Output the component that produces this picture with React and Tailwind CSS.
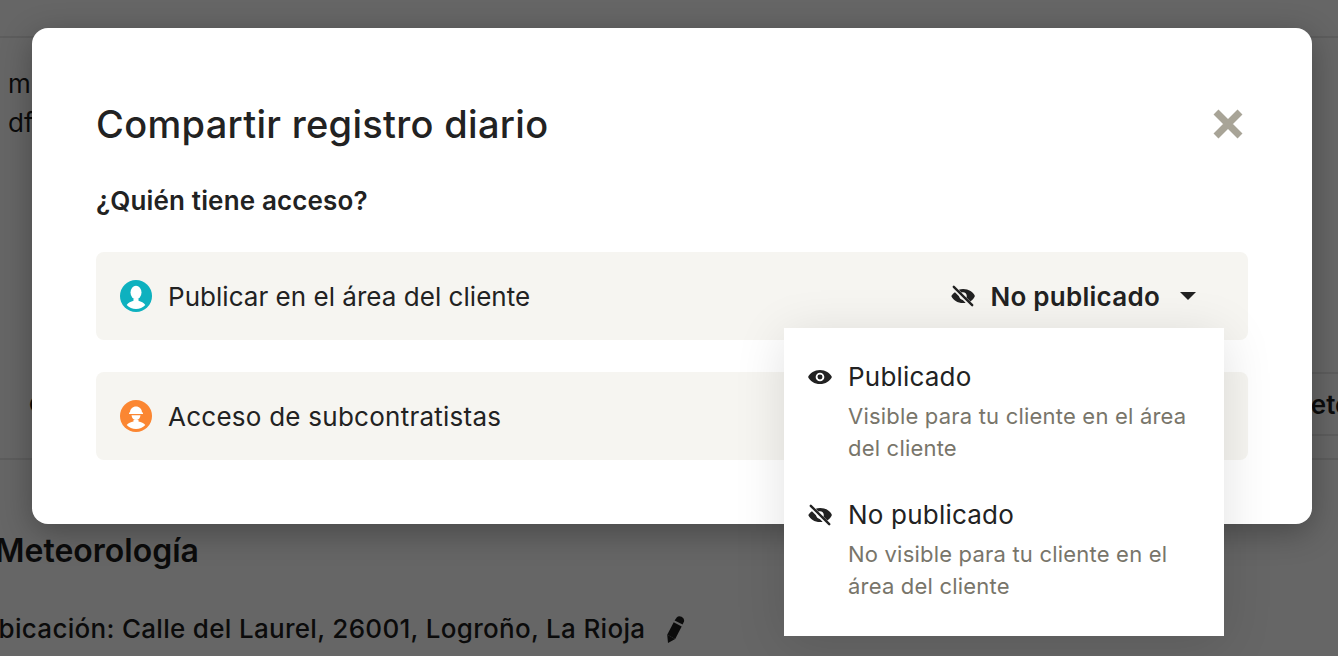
const font = { fontFamily: '"Inter", "Noto Sans", sans-serif' };

function EyeOff({ className, gap = "#ffffff" }) {
  return (
    <svg viewBox="0 0 24 24" className={className} fill="currentColor">
      <path d="M12 5.500c-1.400 0-2.700.3-3.900.8L10.600 8.800c.4-.2.9-.3 1.400-.3 1.900 0 3.500 1.600 3.500 3.500 0 .5-.1 1-.3 1.400l3.600 3.600c2-1.200 3.500-3 4.200-5-1.500-3.800-5.800-6.500-10.800-6.500z" />
      <path d="M5.200 8c-1.800 1.100-3.200 2.600-4 4 1.500 3.800 5.800 6.500 10.800 6.500 1 0 2-.1 2.900-.3l-2.500-2.700c-.1 0-.3 0-.4 0-1.900 0-3.500-1.600-3.500-3.500v-.4L5.200 8z" />
      <path d="M2.500 5.500L18.500 21.500" stroke={gap} strokeWidth="1.200" />
      <path d="M3.500 3.500L20.500 20.500" stroke="currentColor" strokeWidth="2.200" strokeLinecap="round" />
    </svg>
  );
}

function Eye({ className }) {
  return (
    <svg viewBox="0 0 24 24" className={className} fill="currentColor">
      <path d="M12 5.500c-5 0-9.300 2.700-11 6.500 1.700 3.800 6 6.500 11 6.500s9.300-2.700 11-6.500c-1.700-3.800-6-6.500-11-6.500zm0 10.500a4 4 0 1 1 0-8 4 4 0 0 1 0 8zm0-6.300a2.300 2.300 0 1 0 0 4.600 2.300 2.300 0 0 0 0-4.600z" />
    </svg>
  );
}

function ClientIcon() {
  return (
    <svg viewBox="0 0 32 32" className="w-8 h-8 shrink-0">
      <circle cx="16" cy="16" r="16" fill="#0eb1bf" />
      <ellipse cx="16" cy="12.500" rx="5.500" ry="6.800" fill="#ffffff" />
      <path d="M13.500 18.500v2.200c-2.500 1-5.500 1.800-6.800 4.300A14 14 0 0 0 16 29a14 14 0 0 0 9.300-4c-1.300-2.500-4.300-3.300-6.800-4.300v-2.200z" fill="#ffffff" />
    </svg>
  );
}

function SubcontractorIcon() {
  return (
    <svg viewBox="0 0 32 32" className="w-8 h-8 shrink-0">
      <circle cx="16" cy="16" r="16" fill="#fb8632" />
      <path d="M10 12.500c0-3.500 2.700-6 6-6s6 2.500 6 6h1v1.500H9v-1.500z" fill="#ffffff" />
      <path d="M11.500 15.200h9c-.3 2.800-2 4.800-4.500 4.800s-4.200-2-4.500-4.800z" fill="#ffffff" />
      <path d="M13.500 20v1.500c-2.500.8-5.500 1.400-6.800 3.500A14 14 0 0 0 16 29a14 14 0 0 0 9.300-4c-1.300-2.100-4.300-2.700-6.800-3.500V20z" fill="#ffffff" />
    </svg>
  );
}

function Pencil() {
  return (
    <svg viewBox="0 0 20 28" className="w-[20px] h-[28px]" fill="currentColor">
      <path d="M3 28l-.8-8.300 8 4.200z" />
      <path d="M2.200 19.700L8.700 7.200l8 4.200-6.500 12.500z" />
      <path d="M9.600 5.400l8 4.200 1.400-3c.6-1.800-.6-3.800-2.400-4.800s-3.700-.8-4.900.6z" />
    </svg>
  );
}

function AccessRow({ icon, label, labelClass, children }) {
  return (
    <div className="h-[88px] flex items-center justify-between rounded-lg bg-[#f6f5f1] pl-6 pr-[52px]">
      <div className="flex items-center gap-4">
        {icon}
        <span className={"text-[26px] text-[#222222] " + labelClass}>{label}</span>
      </div>
      {children}
    </div>
  );
}

function MenuItem({ icon, title, text }) {
  return (
    <div className="flex gap-4">
      <div className="w-6 h-10 flex items-center shrink-0 text-[#222222]">{icon}</div>
      <div>
        <div className="text-[26px] leading-10 tracking-[0.2px] text-[#222222]">{title}</div>
        <div className="text-[22px] leading-8 tracking-[0.2px] text-[#78756a] mt-[3px]">{text}</div>
      </div>
    </div>
  );
}

export default function App() {
  return (
    <div className="relative h-[656px] w-full overflow-hidden bg-white text-[#1d1d1d]" style={font}>
      <div className="h-[38px] border-b-2 border-[#e8e8e8]" />
      <div className="pl-2 pt-[26px] text-[26px] leading-[39px]">
        <div>m</div>
        <div>df</div>
      </div>
      <div className="mt-[224px] h-[94px] flex items-center justify-between pb-4 border-b-2 border-[#e8e8e8]">
        <div className="pl-7 text-[26px]">●</div>
        <div className="w-[200px] h-[64px] pl-[154px] border-y-2 border-[#e8e8e8] flex items-center whitespace-nowrap text-[26px] font-semibold">Detener</div>
      </div>
      <div className="-ml-[5px] mt-[71px]">
        <h2 className="text-[32px] leading-10 font-semibold">Meteorología</h2>
        <div className="-ml-[16px] mt-[38px] flex items-center gap-5 text-[26px] tracking-[0.3px] font-medium">
          <span>Ubicación: Calle del Laurel, 26001, Logroño, La Rioja</span>
          <Pencil />
        </div>
      </div>

      <div className="absolute inset-0 bg-black/60">
        <div className="relative ml-8 mt-7 w-[1280px] h-[496px] rounded-2xl bg-white p-16 shadow-[0_8px_32px_rgba(0,0,0,0.3)]">
          <div className="flex items-center justify-between">
            <h1 className="text-[38px] leading-[64px] tracking-[0.3px] font-medium text-[#222222]">Compartir registro diario</h1>
            <svg viewBox="0 0 32 32" className="w-8 h-8 mr-1 -mt-px text-[#a8a497]" fill="none" stroke="currentColor" strokeWidth="7">
              <path d="M4 4l24 24M28 4L4 28" />
            </svg>
          </div>
          <h3 className="mt-[27px] text-[26px] leading-9 tracking-[0.15px] font-semibold text-[#222222]">¿Quién tiene acceso?</h3>
          <div className="mt-[33px] flex flex-col gap-8">
            <AccessRow icon={<ClientIcon />} label="Publicar en el área del cliente" labelClass="tracking-[0.03px]">
              <div className="flex items-center text-[#222222]">
                <EyeOff className="w-[26px] h-[26px] -mx-px" gap="#f6f5f1" />
                <span className="ml-4 text-[26px] tracking-[0.25px] font-semibold">No publicado</span>
                <svg viewBox="0 0 16 8" className="ml-5 w-4 h-2" fill="currentColor"><path d="M0 0h16L8 8z" /></svg>
              </div>
            </AccessRow>
            <AccessRow icon={<SubcontractorIcon />} label="Acceso de subcontratistas" labelClass="tracking-[0.25px]" />
          </div>
          <div className="absolute left-[752px] top-[300px] w-[440px] h-[308px] bg-white pl-6 pr-6 pt-[29px] flex flex-col gap-[31px] shadow-[0_8px_48px_rgba(0,0,0,0.12)]">
            <MenuItem icon={<Eye className="w-[26px] h-[26px] -mx-px" />} title="Publicado" text="Visible para tu cliente en el área del cliente" />
            <MenuItem icon={<EyeOff className="w-[26px] h-[26px] -mx-px" />} title="No publicado" text="No visible para tu cliente en el área del cliente" />
          </div>
        </div>
      </div>
    </div>
  );
}
